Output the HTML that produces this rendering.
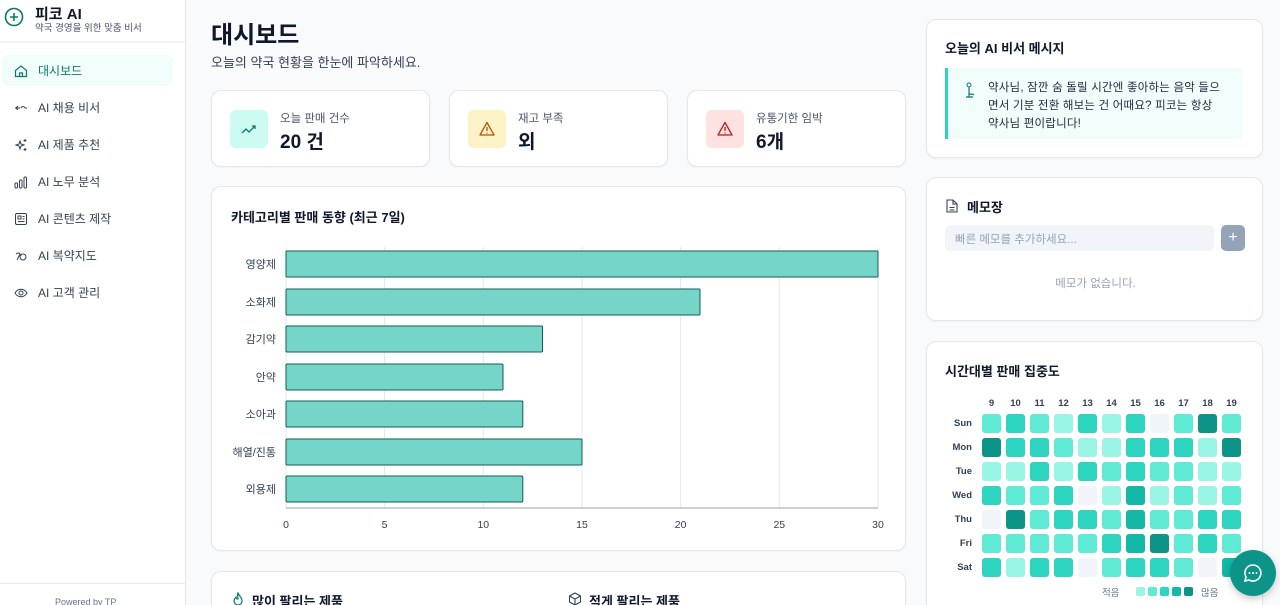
<!DOCTYPE html><html style="overflow:hidden;height:605px"><head><meta charset="utf-8"><style>
*{box-sizing:border-box;margin:0;padding:0}
body{width:1280px;height:605px;overflow:hidden;background:#f8fafc;font-family:"Liberation Sans","Noto Sans CJK KR",sans-serif;color:#0f172a;position:relative}
.abs{position:absolute}
.side{left:0;top:0;width:186px;height:605px;background:#fff;border-right:1px solid #e5e7eb}
.nav{position:absolute;left:2px;width:171px;height:31px;display:flex;align-items:center;font-size:12px;color:#334155}
.nav svg{position:absolute;left:12px}
.nav span{position:absolute;left:36px}
.card{position:absolute;background:#fff;border:1px solid #e5e7eb;border-radius:10px;box-shadow:0 1px 2px rgba(0,0,0,.04)}
.ic{position:absolute;left:18px;top:19px;width:38px;height:38px;border-radius:6px;display:flex;align-items:center;justify-content:center}
.sl{position:absolute;left:68px;top:19px;font-size:11.5px;color:#475569}
.sv{position:absolute;left:68px;top:36px;font-size:19px;font-weight:bold}
.hm{position:absolute;width:19px;height:19px;border-radius:3px}
.hl{position:absolute;font-size:9.5px;font-weight:bold;color:#334155}
</style></head><body>
<div class="abs side">
<svg class="abs" style="left:4px;top:7px" width="20" height="20" viewBox="0 0 20 20"><circle cx="10" cy="10" r="8.5" fill="none" stroke="#0f766e" stroke-width="1.6"/><path d="M10 6v8M6 10h8" stroke="#0f766e" stroke-width="1.6"/></svg>
<div class="abs" style="left:35px;top:3px;font-size:15px;font-weight:bold">피코 AI</div>
<div class="abs" style="left:35px;top:20px;font-size:9.5px;color:#475569">약국 경영을 위한 맞춤 비서</div>
<div class="abs" style="left:0;top:41px;width:185px;height:2px;background:#f1f5f9"></div>
<div class="nav" style="top:55px;background:#f0fdfa;border-radius:6px;color:#0f766e"><svg width="14" height="14" viewBox="0 0 14 14"><path d="M1.5 6.5L7 2l5.5 4.5V12.5h-11z M5.5 12.5V9h3v3.5" fill="none" stroke="#0f766e" stroke-width="1.2"/></svg><span>대시보드</span></div>
<div class="nav" style="top:92px"><svg width="14" height="14" viewBox="0 0 14 14"><path d="M1 7h5M4 5l-2 2 2 2M7 7c1-2 3-2 4 0M11 7l2 0" fill="none" stroke="#334155" stroke-width="1.1"/></svg><span>AI 채용 비서</span></div>
<div class="nav" style="top:129px"><svg width="14" height="14" viewBox="0 0 14 14"><path d="M6 3l1 3 3 1-3 1-1 3-1-3-3-1 3-1zM11 1v3M9.5 2.5h3M11 10v3M9.5 11.5h3" fill="none" stroke="#334155" stroke-width="1"/></svg><span>AI 제품 추천</span></div>
<div class="nav" style="top:166px"><svg width="14" height="14" viewBox="0 0 14 14"><rect x="1" y="8" width="2.5" height="5" rx="1" fill="none" stroke="#334155"/><rect x="5.5" y="5" width="2.5" height="8" rx="1" fill="none" stroke="#334155"/><rect x="10" y="2" width="2.5" height="11" rx="1" fill="none" stroke="#334155"/></svg><span>AI 노무 분석</span></div>
<div class="nav" style="top:203px"><svg width="14" height="14" viewBox="0 0 14 14"><rect x="1.5" y="1.5" width="11" height="11" rx="1.5" fill="none" stroke="#334155"/><path d="M4 4h3v3H4zM8.5 4.5h2M8.5 7h2M4 9.5h6.5" stroke="#334155" fill="none"/></svg><span>AI 콘텐츠 제작</span></div>
<div class="nav" style="top:240px"><svg width="14" height="14" viewBox="0 0 14 14"><circle cx="9" cy="8" r="3" fill="none" stroke="#334155"/><path d="M2 5c2-2 4-1 5 2M3 11l3-6" fill="none" stroke="#334155"/></svg><span>AI 복약지도</span></div>
<div class="nav" style="top:277px"><svg width="14" height="14" viewBox="0 0 14 14"><path d="M1 7c3-5 9-5 12 0-3 5-9 5-12 0z" fill="none" stroke="#334155"/><circle cx="7" cy="7" r="2" fill="none" stroke="#334155"/></svg><span>AI 고객 관리</span></div>
<div class="abs" style="left:0;top:583px;width:185px;height:1px;background:#e5e7eb"></div>
<div class="abs" style="left:55px;top:597px;font-size:9px;color:#64748b">Powered by TP</div>
</div>

<div class="abs" style="left:211px;top:15px;font-size:24px;font-weight:bold">대시보드</div>
<div class="abs" style="left:211px;top:52px;font-size:13px;color:#334155">오늘의 약국 현황을 한눈에 파악하세요.</div>

<div class="card" style="left:211px;top:90px;width:219px;height:77px"><div class="ic" style="background:#ccfbf1"><svg width="18" height="18" viewBox="0 0 18 18"><path d="M2 13l4-4 3 3 6-6M12 6h3v3" fill="none" stroke="#0f766e" stroke-width="1.3"/></svg></div><div class="sl">오늘 판매 건수</div><div class="sv">20 건</div></div>
<div class="card" style="left:449px;top:90px;width:219px;height:77px"><div class="ic" style="background:#fef3c7"><svg width="18" height="18" viewBox="0 0 18 18"><path d="M9 2.5L16 15H2z" fill="none" stroke="#b45309" stroke-width="1.3" stroke-linejoin="round"/><path d="M9 7v4M9 12.5v1" stroke="#b45309" stroke-width="1.3"/></svg></div><div class="sl">재고 부족</div><div class="sv">외</div></div>
<div class="card" style="left:687px;top:90px;width:219px;height:77px"><div class="ic" style="background:#fee2e2"><svg width="18" height="18" viewBox="0 0 18 18"><path d="M9 2.5L16 15H2z" fill="none" stroke="#b91c1c" stroke-width="1.3" stroke-linejoin="round"/><path d="M9 7v4M9 12.5v1" stroke="#b91c1c" stroke-width="1.3"/></svg></div><div class="sl">유통기한 임박</div><div class="sv">6개</div></div>

<div class="card" style="left:211px;top:186px;width:695px;height:365px">
<div class="abs" style="left:19px;top:20px;font-size:13px;font-weight:bold">카테고리별 판매 동향 (최근 7일)</div>
<svg class="abs" style="left:0;top:0" width="695" height="365" font-family="Liberation Sans,Noto Sans CJK KR,sans-serif" font-size="11" fill="#334155">
<g stroke="#e5e7eb"><line x1="74" y1="60" x2="74" y2="321"/><line x1="172.6" y1="60" x2="172.6" y2="321"/><line x1="271.3" y1="60" x2="271.3" y2="321"/><line x1="370" y1="60" x2="370" y2="321"/><line x1="468.6" y1="60" x2="468.6" y2="321"/><line x1="567.3" y1="60" x2="567.3" y2="321"/><line x1="666" y1="60" x2="666" y2="321"/></g>
<line x1="74" y1="321" x2="666" y2="321" stroke="#94a3b8"/>
<g fill="#76d5c9" stroke="#115e59" stroke-width="1">
<rect x="74" y="64" width="592" height="26" rx="1"/><rect x="74" y="102" width="414" height="26" rx="1"/><rect x="74" y="139" width="256.5" height="26" rx="1"/><rect x="74" y="177" width="217" height="26" rx="1"/><rect x="74" y="214" width="236.8" height="26" rx="1"/><rect x="74" y="252" width="296" height="26" rx="1"/><rect x="74" y="289" width="236.8" height="26" rx="1"/></g>
<g text-anchor="end"><text x="64" y="81">영양제</text><text x="64" y="119">소화제</text><text x="64" y="156">감기약</text><text x="64" y="194">안약</text><text x="64" y="231">소아과</text><text x="64" y="269">해열/진통</text><text x="64" y="306">외용제</text></g>
<g text-anchor="middle" font-size="10.5"><text x="74" y="341">0</text><text x="172.6" y="341">5</text><text x="271.3" y="341">10</text><text x="370" y="341">15</text><text x="468.6" y="341">20</text><text x="567.3" y="341">25</text><text x="666" y="341">30</text></g>
</svg></div>

<div class="card" style="left:211px;top:571px;width:695px;height:60px">
<svg class="abs" style="left:19px;top:20px" width="14" height="14" viewBox="0 0 14 14"><path d="M7 1c1 3 4 4 4 8a4 4 0 0 1-8 0c0-2 1-3 2-4 0 2 1 2 2 2 0-2-1-4 0-6z" fill="none" stroke="#0f766e" stroke-width="1.2"/></svg>
<div class="abs" style="left:40px;top:19px;font-size:13px;font-weight:bold">많이 팔리는 제품</div>
<svg class="abs" style="left:356px;top:20px" width="14" height="14" viewBox="0 0 14 14"><path d="M7 1l5.5 3v6L7 13 1.5 10V4zM1.5 4L7 7l5.5-3M7 7v6" fill="none" stroke="#334155" stroke-width="1.1"/></svg>
<div class="abs" style="left:377px;top:19px;font-size:13px;font-weight:bold">적게 팔리는 제품</div>
</div>

<div class="card" style="left:926px;top:19px;width:337px;height:139px">
<div class="abs" style="left:18px;top:18px;font-size:13px;font-weight:bold">오늘의 AI 비서 메시지</div>
<div class="abs" style="left:18px;top:48px;width:298px;height:71px;background:#f0fdfa;border-left:3px solid #2dd4bf;border-radius:0 5px 5px 0">
<svg class="abs" style="left:16px;top:14px" width="12" height="18" viewBox="0 0 12 18"><circle cx="5" cy="3" r="2" fill="none" stroke="#0f766e"/><path d="M5 5v10M2 15h7M5 12c2 0 4 0 5 1" fill="none" stroke="#0f766e" stroke-width="1.2"/></svg>
<div class="abs" style="left:40px;top:11px;width:238px;font-size:11.5px;line-height:18px;color:#1e293b;letter-spacing:0.2px">약사님, 잠깐 숨 돌릴 시간엔 좋아하는 음악 들으면서 기분 전환 해보는 건 어때요? 피코는 항상 약사님 편이랍니다!</div></div></div>

<div class="card" style="left:926px;top:177px;width:337px;height:144px">
<svg class="abs" style="left:19px;top:21px" width="12" height="14" viewBox="0 0 12 14"><path d="M1 1h6l4 4v8H1zM7 1v4h4M3.5 8.5h5M3.5 11h5" fill="none" stroke="#334155" stroke-width="1.1"/></svg>
<div class="abs" style="left:40px;top:19px;font-size:13px;font-weight:bold">메모장</div>
<div class="abs" style="left:18px;top:47px;width:269px;height:26px;background:#f1f5f9;border-radius:5px;font-size:11.5px;color:#94a3b8;padding:6px 10px">빠른 메모를 추가하세요...</div>
<div class="abs" style="left:294px;top:47px;width:24px;height:26px;background:#94a3b8;border-radius:5px;color:#fff;font-size:16px;text-align:center;line-height:25px">+</div>
<div class="abs" style="left:0;top:97px;width:337px;text-align:center;font-size:11.5px;color:#94a3b8">메모가 없습니다.</div></div>

<div class="card" style="left:926px;top:341px;width:337px;height:280px">
<div class="abs" style="left:18px;top:19px;font-size:13px;font-weight:bold">시간대별 판매 집중도</div>
<div id="hm"></div></div>
<script>
var c=["#f1f5f9","#99f6e4","#5eead4","#2dd4bf","#14b8a6","#0d9488"];
var d=["23213130252","53321133315","11313232211","32230141212","05233242233","22222345232","31330233204"];
var days=["Sun","Mon","Tue","Wed","Thu","Fri","Sat"];var h="";
for(var j=0;j<11;j++)h+='<div class="hl" style="left:'+(55+24*j)+'px;top:56px;width:19px;text-align:center">'+(9+j)+'</div>';
for(var i=0;i<7;i++){h+='<div class="hl" style="left:0;width:45px;text-align:right;top:'+(76+24*i)+'px">'+days[i]+'</div>';
for(var j=0;j<11;j++)h+='<div class="hm" style="left:'+(55+24*j)+'px;top:'+(72+24*i)+'px;background:'+c[+d[i][j]]+'"></div>';}
h+='<div class="abs" style="left:175px;top:243px;font-size:9.5px;color:#64748b">적음</div>';
for(var k=1;k<6;k++)h+='<div class="abs" style="left:'+(209+12*(k-1))+'px;top:245px;width:9px;height:9px;border-radius:2px;background:'+c[k]+'"></div>';
h+='<div class="abs" style="left:274px;top:243px;font-size:9.5px;color:#64748b">많음</div>';
document.getElementById("hm").innerHTML=h;
</script>
<div class="abs" style="left:1230px;top:550px;width:46px;height:46px;border-radius:50%;background:#0d9488;box-shadow:0 3px 8px rgba(0,0,0,.2)"><svg class="abs" style="left:13px;top:13px" width="20" height="20" viewBox="0 0 20 20"><path d="M10 2a8 8 0 1 1-4 15l-4 1 1-4A8 8 0 0 1 10 2z" fill="none" stroke="#fff" stroke-width="1.6"/><circle cx="6.5" cy="10" r="1" fill="#fff"/><circle cx="10" cy="10" r="1" fill="#fff"/><circle cx="13.5" cy="10" r="1" fill="#fff"/></svg></div>
</body></html>
